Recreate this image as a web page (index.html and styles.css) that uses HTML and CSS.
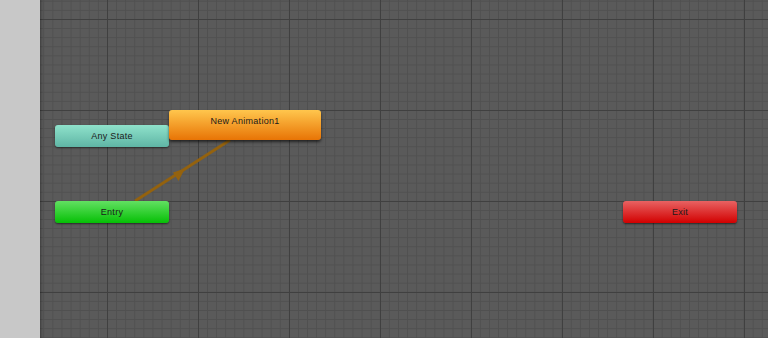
FILE: index.html
```html
<!DOCTYPE html>
<html lang="en">
<head>
    <meta charset="UTF-8">
    <title>Animator</title>
    <link rel="stylesheet" href="styles.css">
</head>
<body>
    <div class="janela">
        <div class="lateral"></div>
        <div class="grafo">
            <svg class="transicoes" width="728" height="338">
                <line x1="95" y1="201" x2="190" y2="140" stroke="#94620e" stroke-width="2.8" />
                <polygon points="145,168.5 133,172.5 138.5,181" fill="#94620e" />
            </svg>
            <div class="no qualquer" style="left: 15px; top: 125px;">Any State</div>
            <div class="no anim" style="left: 129px; top: 110px;">New Animation1</div>
            <div class="no entrada" style="left: 15px; top: 201px;">Entry</div>
            <div class="no saida" style="left: 583px; top: 201px;">Exit</div>
        </div>
    </div>
</body>
</html>
```

FILE: styles.css
```css
body {
    margin: 0;
    font-family: "Liberation Sans", Arial, sans-serif;
    overflow: hidden;
}
.janela {
    display: flex;
    width: 768px;
    height: 338px;
}
.lateral {
    width: 40px;
    background-color: #c8c8c8;
}
.grafo {
    position: relative;
    flex: 1;
    background-color: #5a5a5a;
    background-image:
        linear-gradient(to right, #404040 1px, transparent 1px),
        linear-gradient(to bottom, #404040 1px, transparent 1px),
        linear-gradient(to right, #505050 1px, transparent 1px),
        linear-gradient(to bottom, #505050 1px, transparent 1px);
    background-size: 91px 91px, 91px 91px, 9.1px 9.1px, 9.1px 9.1px;
    background-position: 67px 19px, 67px 19px, 67px 19px, 67px 19px;
    box-shadow: inset 3px 0 3px -2px rgba(0, 0, 0, 0.35);
}
.transicoes {
    position: absolute;
    left: 0;
    top: 0;
}
.no {
    position: absolute;
    width: 114px;
    height: 22px;
    display: flex;
    align-items: center;
    justify-content: center;
    font-size: 9px;
    letter-spacing: 0.3px;
    color: #1a1a1a;
    border-radius: 3px;
    box-shadow: 0 1px 2px rgba(0, 0, 0, 0.55);
}
.qualquer {
    background: linear-gradient(#8fe2cb, #5fb5a5);
}
.anim {
    width: 152px;
    height: 30px;
    padding-bottom: 9px;
    box-sizing: border-box;
    background: linear-gradient(#ffc64d, #e87405);
    box-shadow: 0 2px 3px rgba(0, 0, 0, 0.6);
}
.entrada {
    background: linear-gradient(#62e062, #06c006);
}
.saida {
    background: linear-gradient(#e86262, #d20000);
}
```
